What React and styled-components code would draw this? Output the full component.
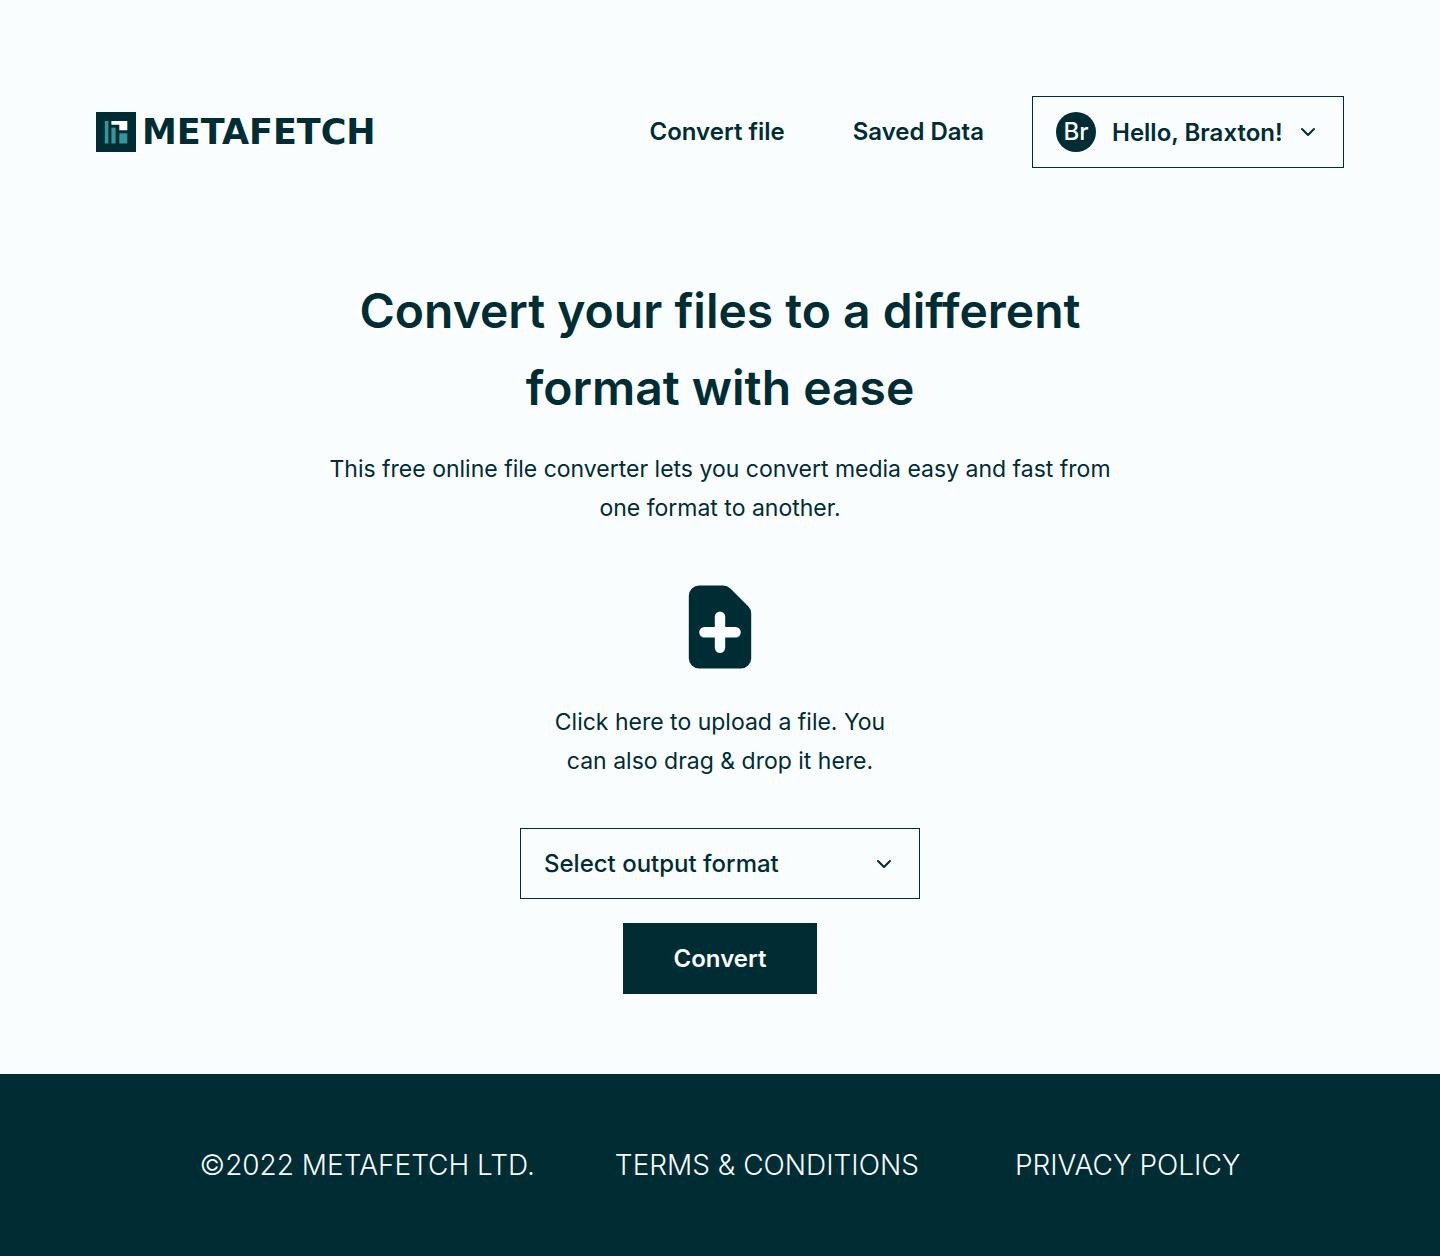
import React, { useRef } from 'react';
import styled, { createGlobalStyle } from 'styled-components';

const ink = '#002c33';
const paper = '#f9fdfe';
const teal = '#36949b';

const GlobalStyle = createGlobalStyle`
  *, *::before, *::after { box-sizing: border-box; }
  body {
    margin: 0;
    background: ${paper};
    color: ${ink};
    font-family: Inter, 'Noto Sans', sans-serif;
  }
  button, select { font-family: inherit; color: inherit; }
`;

const Page = styled.div`
  min-height: 100vh;
  display: flex;
  flex-direction: column;
`;

const Header = styled.header`
  display: flex;
  align-items: center;
  justify-content: space-between;
  padding: 96px 96px 0;
`;

const Brand = styled.a`
  display: flex;
  align-items: center;
  gap: 6px;
  color: ${ink};
  text-decoration: none;
`;

const Wordmark = styled.span`
  font-family: 'DejaVu Sans', sans-serif;
  font-size: 35px;
  font-weight: 700;
  line-height: 40px;
`;

const HeaderActions = styled.div`
  display: flex;
  align-items: center;
  gap: 48px;
`;

const Nav = styled.nav`
  display: flex;
  gap: 68px;
`;

const NavLink = styled.a`
  color: ${ink};
  font-size: 24px;
  font-weight: 600;
  line-height: 38px;
  text-decoration: none;
`;

const AccountButton = styled.button`
  display: flex;
  align-items: center;
  justify-content: space-between;
  width: 312px;
  height: 72px;
  padding: 0 23px;
  border: 1px solid ${ink};
  background: transparent;
  font-size: 24px;
  font-weight: 600;
  cursor: pointer;
`;

const AccountLabel = styled.span`
  display: flex;
  align-items: center;
  gap: 16px;
  white-space: nowrap;
`;

const Avatar = styled.span`
  width: 40px;
  height: 40px;
  border-radius: 50%;
  background: ${ink};
  color: ${paper};
  font-weight: 500;
  line-height: 40px;
  text-align: center;
`;

const ChevronSvg = styled.svg`
  flex: none;
  width: 24px;
  height: 24px;
  fill: none;
  stroke: ${ink};
  stroke-width: 2;
  stroke-linecap: round;
  stroke-linejoin: round;
  pointer-events: none;
`;

const Main = styled.main`
  flex: 1;
  display: flex;
  flex-direction: column;
  align-items: center;
  padding: 104px 24px 80px;
  text-align: center;
`;

const Title = styled.h1`
  max-width: 800px;
  margin: 0 0 24px;
  font-size: 48px;
  font-weight: 600;
  line-height: 77px;
`;

const Text = styled.p`
  max-width: 800px;
  margin: 0;
  font-size: 23px;
  line-height: 39px;
`;

const DropZone = styled.button`
  display: flex;
  flex-direction: column;
  align-items: center;
  gap: 24px;
  margin: 47px 0;
  padding: 0;
  border: 0;
  background: transparent;
  cursor: pointer;
`;

const UploadText = styled.span`
  max-width: 360px;
  font-size: 23px;
  line-height: 39px;
`;

const Form = styled.form`
  display: flex;
  flex-direction: column;
  align-items: center;
  gap: 24px;
  width: 100%;
`;

const SelectBox = styled.div`
  display: grid;
  align-items: center;
  width: 100%;
  max-width: 400px;

  > * { grid-area: 1 / 1; }
  > svg { justify-self: end; margin-right: 24px; }
`;

const Select = styled.select`
  appearance: none;
  width: 100%;
  height: 71px;
  padding: 0 56px 0 23px;
  border: 1px solid ${ink};
  border-radius: 0;
  background: transparent;
  font-size: 24px;
  font-weight: 500;
  cursor: pointer;
`;

const ConvertButton = styled.button`
  width: 194px;
  height: 71px;
  border: 0;
  background: ${ink};
  && { color: ${paper}; }
  font-size: 24px;
  font-weight: 600;
  cursor: pointer;
`;

const Footer = styled.footer`
  display: flex;
  flex-wrap: wrap;
  align-items: center;
  justify-content: center;
  gap: 80px;
  padding: 67px 96px;
  background: ${ink};
  color: ${paper};
  font-size: 28px;
  font-weight: 300;
  line-height: 48px;
`;

const FooterLinks = styled.nav`
  display: flex;
  gap: 96px;
`;

const FooterLink = styled.a`
  color: inherit;
  text-decoration: none;
`;

const Mark = () => (
  <svg width="40" height="40" viewBox="0 0 40 40" aria-hidden="true">
    <rect width="40" height="40" fill={ink} />
    <rect x="8.8" y="9" width="3.6" height="22.5" fill={teal} />
    <rect x="15.4" y="15.6" width="4.2" height="15.9" fill={teal} />
    <rect x="23.3" y="21.3" width="8" height="10.2" fill={teal} />
    <path d="M15.4 9h15.9v9.2h-8v-5.4h-7.9z" fill="#fff" />
  </svg>
);

const Chevron = () => (
  <ChevronSvg viewBox="0 0 24 24" aria-hidden="true">
    <path d="M6 9l6 6 6-6" />
  </ChevronSvg>
);

const FileAddIcon = () => (
  <svg width="104" height="104" viewBox="0 0 20 20" fill={ink} aria-hidden="true">
    <path
      fillRule="evenodd"
      d="M6 2a2 2 0 00-2 2v12a2 2 0 002 2h8a2 2 0 002-2V7.414A2 2 0 0015.414 6L12 2.586A2 2 0 0010.586 2H6zm5 6a1 1 0 10-2 0v2H7a1 1 0 100 2h2v2a1 1 0 102 0v-2h2a1 1 0 100-2h-2V8z"
    />
  </svg>
);

export default function App() {
  const fileInput = useRef(null);

  return (
    <>
      <GlobalStyle />
      <Page>
        <Header>
          <Brand href="#">
            <Mark />
            <Wordmark>METAFETCH</Wordmark>
          </Brand>
          <HeaderActions>
            <Nav>
              <NavLink href="#convert">Convert file</NavLink>
              <NavLink href="#saved">Saved Data</NavLink>
            </Nav>
            <AccountButton type="button">
              <AccountLabel>
                <Avatar>Br</Avatar>
                Hello, Braxton!
              </AccountLabel>
              <Chevron />
            </AccountButton>
          </HeaderActions>
        </Header>

        <Main>
          <Title>Convert your files to a different format with ease</Title>
          <Text>
            This free online file converter lets you convert media easy and fast from one format to another.
          </Text>
          <DropZone type="button" onClick={() => fileInput.current.click()}>
            <FileAddIcon />
            <UploadText>Click here to upload a file. You can also drag &amp; drop it here.</UploadText>
          </DropZone>
          <input ref={fileInput} type="file" aria-label="File to convert" hidden />
          <Form onSubmit={(e) => e.preventDefault()}>
            <SelectBox>
              <Select aria-label="Select output format" defaultValue="">
                <option value="">Select output format</option>
              </Select>
              <Chevron />
            </SelectBox>
            <ConvertButton type="submit">Convert</ConvertButton>
          </Form>
        </Main>

        <Footer>
          <span>©2022 METAFETCH LTD.</span>
          <FooterLinks>
            <FooterLink href="#terms">TERMS &amp; CONDITIONS</FooterLink>
            <FooterLink href="#privacy">PRIVACY POLICY</FooterLink>
          </FooterLinks>
        </Footer>
      </Page>
    </>
  );
}
